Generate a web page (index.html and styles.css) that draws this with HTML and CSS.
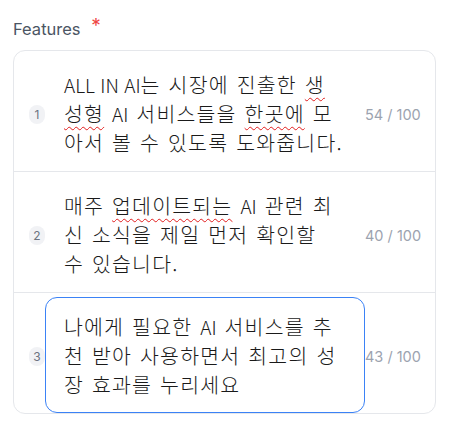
FILE: index.html
```html
<!DOCTYPE html>
<html lang="ko">
<head>
    <meta charset="UTF-8">
    <meta name="viewport" content="width=device-width, initial-scale=1.0">
    <title>Features</title>
    <link rel="stylesheet" href="styles.css">
</head>
<body>
    <div class="form-group">
        <label class="label">Features <span class="required">*</span></label>
        <div class="feature-list">
            <div class="feature-row">
                <span class="badge">1</span>
                <div class="field"><span class="latin">ALL IN AI</span>는 시장에 진출한 <span class="typo">생</span><br><span class="typo">성형</span> <span class="latin">AI</span> 서비스들을 <span class="typo">한곳에</span> 모<br>아서 볼 수 있도록 도와줍니다.</div>
                <span class="counter">54 / 100</span>
            </div>
            <div class="feature-row">
                <span class="badge">2</span>
                <div class="field">매주 <span class="typo">업데이트되는</span> <span class="latin">AI</span> 관련 최<br>신 소식을 제일 먼저 확인할<br>수 있습니다.</div>
                <span class="counter">40 / 100</span>
            </div>
            <div class="feature-row">
                <span class="badge">3</span>
                <div class="field focused">나에게 필요한 <span class="latin">AI</span> 서비스를 추<br>천 받아 사용하면서 최고의 성<br>장 효과를 누리세요</div>
                <span class="counter">43 / 100</span>
            </div>
        </div>
    </div>
</body>
</html>
```

FILE: styles.css
```css
body {
    margin: 0;
    padding: 0 14px 0 13px;
    background: #fff;
    font-family: Inter, "Noto Sans", sans-serif;
}
.form-group {
    padding-top: 18px;
}
.label {
    display: block;
    font-size: 16.5px;
    line-height: 22px;
    color: #4b5563;
    margin-bottom: 10px;
}
.required {
    color: #ef4444;
    font-size: 19px;
    margin-left: 6px;
    position: relative;
    top: -3px;
}
.feature-list {
    border: 1px solid #e5e7eb;
    border-radius: 12px;
}
.feature-row {
    display: flex;
    align-items: center;
    height: 121px;
    padding: 4px 15px 0 15px;
    box-sizing: border-box;
    border-bottom: 1px solid #e5e7eb;
}
.feature-row:last-child {
    height: 120px;
    border-bottom: none;
}
.badge {
    flex: none;
    width: 16px;
    height: 19px;
    margin-top: 3px;
    border-radius: 8px;
    background: #f1f2f5;
    color: #6b7280;
    font-size: 12px;
    line-height: 19px;
    text-align: center;
}
.field {
    flex: none;
    position: relative;
    z-index: 1;
    width: 320px;
    height: 116px;
    box-sizing: border-box;
    padding: 14px 10px 0 18px;
    border: 1px solid transparent;
    border-radius: 12px;
    background: #fff;
    font-family: "Noto Sans CJK KR", "Noto Sans", sans-serif;
    font-size: 20.5px;
    font-weight: 300;
    line-height: 29px;
    letter-spacing: 1.2px;
    word-spacing: 1px;
    color: #1a1a1a;
    white-space: nowrap;
}
.field.focused {
    border-color: #3b82f6;
}
.latin {
    font-size: 19px;
    letter-spacing: 0;
    word-spacing: 0;
}
.typo {
    text-decoration: underline wavy #e11d1d;
    text-decoration-thickness: 1px;
    text-underline-offset: 4px;
}
.counter {
    flex: 1;
    margin-top: 2px;
    text-align: right;
    white-space: nowrap;
    font-size: 14.5px;
    color: #9ca3af;
}
```
